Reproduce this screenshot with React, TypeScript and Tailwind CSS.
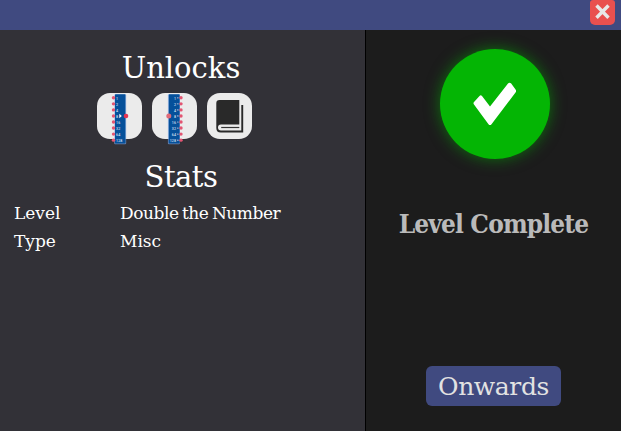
import React from "react";

const slab = "font-['Roboto_Slab','DejaVu_Serif_Condensed','DejaVu_Serif',serif] [font-stretch:condensed]";
const wideSlab = "font-['Roboto_Slab','DejaVu_Serif',serif] [font-stretch:normal]";
const powers = ["1", "2", "4", "8", "16", "32", "64", "128"];

function Splitter({ mirrored = false }: { mirrored?: boolean }) {
  const x = mirrored ? 16.7 : 18;
  return (
    <svg viewBox="0 0 46 54" className="h-[54px] w-[46px] shrink-0 overflow-visible">
      <rect x={x - 0.8} y="1.2" width="12" height="50" rx="1" fill="#8caeea" opacity=".65" />
      <rect x={x} y="1.2" width={mirrored ? 11 : 10.5} height="49.2" rx=".6" fill="#05509a" />
      {powers.map((power, i) => (
        <g key={power}>
          <circle cx={mirrored ? 29 : 16.5} cy={4.8 + i * 6.05} r="1.7" fill="#e35572" />
          {mirrored && <circle cx="25.9" cy={4.8 + i * 6.05} r=".6" fill="white" />}
          <text
            x={mirrored ? 24 : 19.1}
            y={6.5 + i * 6.05}
            textAnchor={mirrored ? "end" : "start"}
            fontFamily="Roboto, sans-serif"
            fontSize="4.2"
            fill="#e8f2ff"
          >
            {power}
          </text>
        </g>
      ))}
      {mirrored ? (
        <circle cx="16.8" cy="23" r="2.5" fill="#df6a79" />
      ) : (
        <>
          <path d="M22.3 20.8v4.4l2.5-2.2z" fill="white" />
          <circle cx="29" cy="23" r="2.3" fill="#e43454" />
        </>
      )}
    </svg>
  );
}

function Book() {
  return (
    <svg viewBox="0 0 46 46" className="size-[46px]">
      <path d="M12.5 7H32.3V31.4H14Q11 31.4 11 34.4T14 37.4H34.3V12H36.2V39.6H13.8Q9.3 39.6 9.3 35V10.3Q9.3 7 12.5 7Z" fill="#292929" />
      <path d="M32.3 34.5H14.2" fill="none" stroke="#333" strokeWidth="1.2" />
    </svg>
  );
}

function Unlock({ children }: { children: React.ReactNode }) {
  return <div className="h-[46px] w-[45.5px] rounded-[13px] bg-[#ebebeb]">{children}</div>;
}

export default function App() {
  return (
    <main className={`flex h-[431px] w-[621px] flex-col overflow-hidden bg-[#1c1c1c] ${slab}`}>
      <header className="flex h-[30px] shrink-0 justify-end bg-[#404a80] pr-[6px]">
        <button aria-label="Close" className="flex h-[25px] w-[25px] items-center justify-center rounded-b-[5px] rounded-t-[3px] bg-[#e9504f]">
          <svg viewBox="0 0 25 25" className="size-[25px]">
            <path d="m6.5 5.5 12 12.3M18.5 5.5l-12 12.3" stroke="#e8e8e8" strokeWidth="3.4" />
          </svg>
        </button>
      </header>
      <div className="flex min-h-0 flex-1">
        <section className="w-[366px] border-r border-black bg-[#323137] text-white">
          <h2 className={`mt-[18px] h-[40px] pr-[3px] text-center text-[29px] leading-[40px] ${wideSlab}`}>Unlocks</h2>
          <div className="mt-[5px] flex h-[46px] gap-[9.5px] pl-[96.6px]">
            <Unlock><Splitter /></Unlock>
            <Unlock><Splitter mirrored /></Unlock>
            <Unlock><Book /></Unlock>
          </div>
          <h2 className={`mt-[18px] h-[40px] pr-[3px] text-center text-[29px] leading-[40px] tracking-[-0.5px] ${wideSlab}`}>Stats</h2>
          <dl className={`mt-[2px] grid grid-cols-[106px_1fr] pl-[14px] text-[17px] leading-[28px] ${wideSlab}`}>
            <dt>Level</dt>
            <dd className="tracking-[-0.45px] [word-spacing:-1.5px]">Double the Number</dd>
            <dt>Type</dt>
            <dd>Misc</dd>
          </dl>
        </section>
        <section className="flex flex-1 flex-col items-center">
          <div className="mt-[19px] ml-[2px] size-[110px] rounded-full bg-[#04b504] shadow-[0_0_15px_#04b50490]">
            <svg viewBox="0 0 110 110" className="size-full">
              <path d="M39.5 47 33.8 53.3Q33.2 54.3 33.8 55.2L48.5 75.2Q50 77 51.5 75.2L75.7 43.3Q76.5 42 75.7 40.8L71.2 34.6Q69.5 32.8 68 34.6L50 57.5 42 47Q40.7 45.7 39.5 47Z" fill="white" />
            </svg>
          </div>
          <h1 className="mt-[45px] h-[40px] whitespace-nowrap text-[26px] leading-[40px] font-bold tracking-[-0.85px] text-[#bababa]">Level Complete</h1>
          <button className={`mt-[122px] h-[40px] w-[135px] rounded-[6px] bg-[#404a80] pt-px text-[25px] leading-[40px] tracking-[-0.4px] text-[#e2e2e2] ${wideSlab}`}>Onwards</button>
        </section>
      </div>
    </main>
  );
}
